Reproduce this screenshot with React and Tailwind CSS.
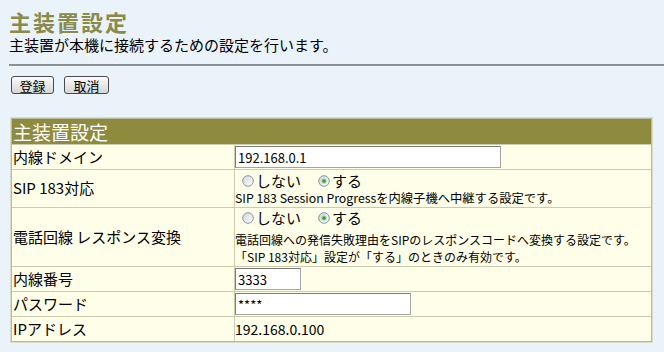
import React from "react";

const F = { fontFamily: '"Noto Sans CJK JP", "Liberation Sans", sans-serif' };

function Radio({ checked, id }) {
  return (
    <svg width="12" height="12" viewBox="0 0 12 12" className="shrink-0">
      <defs>
        <linearGradient id={id} x1="0" y1="0" x2="1" y2="1">
          <stop offset="0" stopColor="#cfd6dc" />
          <stop offset="1" stopColor="#ffffff" />
        </linearGradient>
      </defs>
      <circle cx="6" cy="6" r="5.3" fill={`url(#${id})`} stroke="#8796a4" strokeWidth="1" />
      {checked && <circle cx="6" cy="6" r="2.6" fill="#8fd08a" />}
      {checked && <circle cx="6" cy="6" r="1.6" fill="#3f9a3a" />}
    </svg>
  );
}

function Radios({ idp }) {
  return (
    <div className="flex items-center h-[18px] leading-[18px] text-[15px] text-black">
      <span className="ml-[7px]"><Radio id={idp + "a"} /></span>
      <span className="ml-[2px] w-[62px]">しない</span>
      <Radio id={idp + "b"} checked />
      <span className="ml-[2px]">する</span>
    </div>
  );
}

function Input({ w, value }) {
  return (
    <div
      className={`h-[22px] bg-white border border-[#a5a5a5] border-t-[#7b7b7b] border-l-[#7b7b7b] flex items-center pl-[2px] text-[13px] text-black leading-none ${w}`}
    >
      {value}
    </div>
  );
}

function Row({ label, h, children, center = true }) {
  return (
    <div className={`flex border-t border-[#cbcbae] ${h}`}>
      <div className="w-[223px] shrink-0 border-r border-[#cbcbae] flex items-center pl-[1px] text-[15px] text-black">
        {label}
      </div>
      <div className={`flex-1 flex flex-col ${center ? "justify-center" : ""}`}>{children}</div>
    </div>
  );
}

export default function App() {
  return (
    <div className="w-[664px] h-[352px] overflow-hidden bg-[#eaf2fa]" style={F}>
      <div className="pl-[9px] pt-[10px]">
        <div className="text-[22px] leading-[22px] font-bold tracking-[2px] text-[#8a8a4a]">主装置設定</div>
        <div className="mt-[5px] text-[15px] leading-[15px] text-black">主装置が本機に接続するための設定を行います。</div>
      </div>
      <div className="ml-[9px] mt-[12px] h-[2px] bg-[#8a9299]" />
      <div className="ml-[9px] h-[1px] bg-[#f6f9fc]" />
      <div className="flex gap-[10px] pl-[11px] mt-[9px]">
        <button className="w-[43px] h-[18px] rounded-[3px] border border-[#4a4a4a] bg-gradient-to-b from-[#fbfbfb] to-[#d6d6d6] text-[13px] leading-none text-black flex items-center justify-center">
          登録
        </button>
        <button className="w-[45px] h-[18px] rounded-[3px] border border-[#4a4a4a] bg-gradient-to-b from-[#fbfbfb] to-[#d6d6d6] text-[13px] leading-none text-black flex items-center justify-center">
          取消
        </button>
      </div>
      <div className="ml-[10px] mt-[23px] w-[643px] border border-[#dcdccb]">
        <div className="border border-[#b9b9a0] bg-[#fefee9]">
          <div className="h-[25px] bg-[#8f8b3e] text-white text-[19px] leading-[25px] pl-[1px]">主装置設定</div>
          <Row label="内線ドメイン" h="h-[25px]">
            <Input w="w-[266px]" value="192.168.0.1" />
          </Row>
          <Row label="SIP 183対応" h="h-[38px]" center={false}>
            <div className="pt-[2px]">
              <Radios idp="r1" />
              <div className="text-[12.3px] leading-[17px] text-black">
                SIP 183 Session Progressを内線子機へ中継する設定です。
              </div>
            </div>
          </Row>
          <Row label="電話回線 レスポンス変換" h="h-[59px]" center={false}>
            <div className="pt-[1px]">
              <Radios idp="r2" />
              <div className="mt-[4px] text-[12px] leading-[17px] text-black">
                <div>電話回線への発信失敗理由をSIPのレスポンスコードへ変換する設定です。</div>
                <div>「SIP 183対応」設定が「する」のときのみ有効です。</div>
              </div>
            </div>
          </Row>
          <Row label="内線番号" h="h-[25px]">
            <Input w="w-[66px]" value="3333" />
          </Row>
          <Row label="パスワード" h="h-[25px]">
            <Input w="w-[176px]" value="****" />
          </Row>
          <Row label="IPアドレス" h="h-[25px]">
            <div className="text-[14px] text-black">192.168.0.100</div>
          </Row>
        </div>
      </div>
    </div>
  );
}
